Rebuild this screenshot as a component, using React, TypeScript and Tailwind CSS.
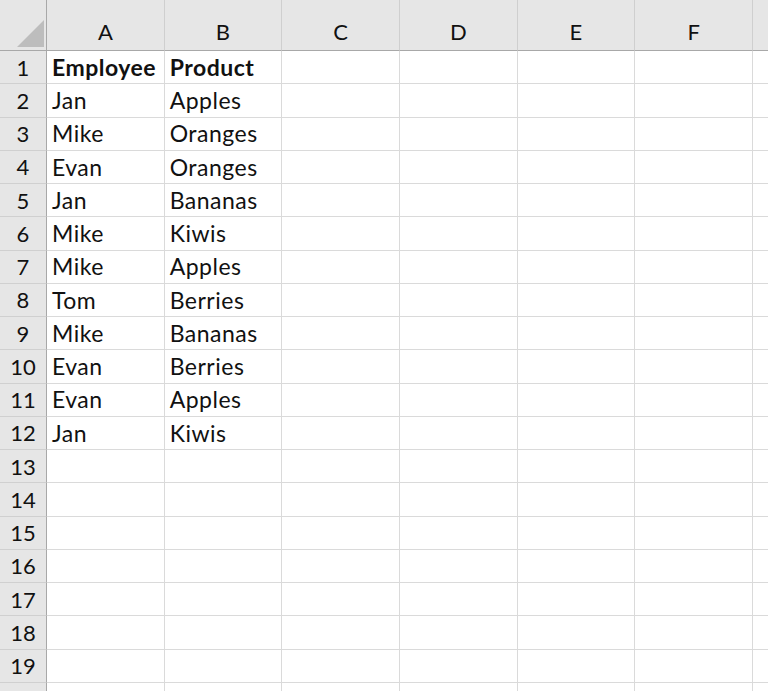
import React from "react";

const columns = ["A", "B", "C", "D", "E", "F"];

const data: [string, string][] = [
  ["Employee", "Product"],
  ["Jan", "Apples"],
  ["Mike", "Oranges"],
  ["Evan", "Oranges"],
  ["Jan", "Bananas"],
  ["Mike", "Kiwis"],
  ["Mike", "Apples"],
  ["Tom", "Berries"],
  ["Mike", "Bananas"],
  ["Evan", "Berries"],
  ["Evan", "Apples"],
  ["Jan", "Kiwis"],
];

// 19 numbered rows fit on screen; the 20th only peeks in at the bottom edge
const ROWS = 20;
const LABELLED_ROWS = 19;

export default function App() {
  return (
    <div
      className="w-[768px] h-[691px] overflow-hidden bg-white text-[#111]"
      style={{ fontFamily: "Lato, 'Open Sans', sans-serif" }}
    >
      <div className="grid grid-cols-[47px_repeat(6,117.67px)_1fr] grid-rows-[51px_repeat(20,33.26px)]">
        {/* corner select-all */}
        <div className="relative bg-[#e6e6e6] border-r border-b border-[#a8a8a8]">
          <svg className="absolute left-[17px] top-[20px]" width="27" height="27" viewBox="0 0 27 27">
            <polygon points="27,0 27,27 0,27" fill="#bdbdbd" />
          </svg>
        </div>
        {columns.map((c) => (
          <div
            key={c}
            className="flex items-end justify-center pb-[4px] bg-[#e6e6e6] border-r border-b border-r-[#cfcfcf] border-b-[#a8a8a8] text-[22px] leading-none"
          >
            <span className="pb-[3px]">{c}</span>
          </div>
        ))}
        <div className="bg-[#e6e6e6] border-b border-[#a8a8a8]" />

        {Array.from({ length: ROWS }, (_, r) => {
          const row = data[r];
          return (
            <React.Fragment key={r}>
              <div className="flex items-center justify-center bg-[#e6e6e6] border-r border-b border-r-[#a8a8a8] border-b-[#d0d0d0] text-[22px]">
                {r < LABELLED_ROWS ? r + 1 : ""}
              </div>
              {columns.map((c, ci) => {
                const text = row && ci < 2 ? row[ci] : "";
                return (
                  <div
                    key={c}
                    className={`flex items-center pl-[5px] border-r border-b border-[#dadada] text-[23px] tracking-[0.5px] whitespace-nowrap ${
                      r === 0 ? "font-bold" : ""
                    }`}
                  >
                    {text}
                  </div>
                );
              })}
              <div className="border-b border-[#dadada]" />
            </React.Fragment>
          );
        })}
      </div>
    </div>
  );
}
